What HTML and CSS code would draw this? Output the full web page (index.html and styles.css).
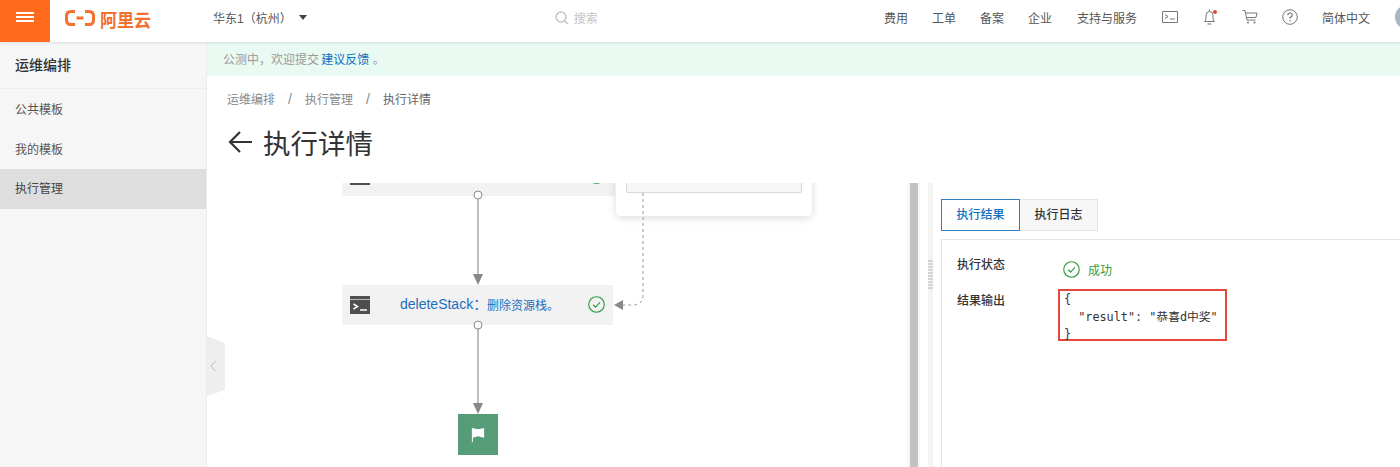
FILE: index.html
```html
<!DOCTYPE html>
<html lang="zh-CN">
<head>
    <meta charset="UTF-8">
    <title>执行详情</title>
    <link rel="stylesheet" href="styles.css">
</head>
<body>
    <header class="topbar">
        <div class="menu-btn"><span></span><span></span><span></span></div>
        <div class="logo">
            <svg class="logo-mark" width="30" height="16" viewBox="0 0 30 16">
                <path d="M10 1.500H6Q1.500 1.500 1.500 6V10Q1.500 14.500 6 14.500H10M20 1.500H24Q28.500 1.500 28.500 6V10Q28.500 14.500 24 14.500H20M11.500 8H18.500" fill="none" stroke="#f4702c" stroke-width="3"/>
            </svg>
            <span class="logo-text">阿里云</span>
        </div>
        <div class="region">华东1（杭州）<i class="caret"></i></div>
        <div class="search">
            <svg width="14" height="14" viewBox="0 0 14 14"><circle cx="6" cy="6" r="5" fill="none" stroke="#c4c4c4" stroke-width="1.500"/><path d="M9.500 9.500L13 13" stroke="#c4c4c4" stroke-width="1.500"/></svg>
            <span>搜索</span>
        </div>
        <nav class="top-nav">
            <a>费用</a>
            <a>工单</a>
            <a>备案</a>
            <a class="nudge">企业</a>
            <a class="nudge">支持与服务</a>
            <svg width="16" height="16" viewBox="0 0 16 16"><path d="M.5 2.500H15.500V13.500H.5Z" fill="none" stroke="#777"/><path d="M3 5.500L6 7.500L3 9.500M8 10H13" fill="none" stroke="#777"/></svg>
            <svg width="16" height="16" viewBox="0 0 16 16"><path d="M2.500 12.500Q4 11.500 4 9V6.500Q4 2.500 7.500 2.500Q11 2.500 11 6.500V9Q11 11.500 12.500 12.500ZM7.500 .5V2.500M5.500 15H9.500" fill="none" stroke="#777"/><circle cx="13" cy="3" r="2" fill="#e5483b"/></svg>
            <svg width="16" height="16" viewBox="0 0 16 16"><path d="M.5 1.500H3L5 11H13.500M3.500 4H15L14 8.500H4.500" fill="none" stroke="#777"/><circle cx="6" cy="13.500" r="1" fill="#777"/><circle cx="12.500" cy="13.500" r="1" fill="#777"/></svg>
            <svg width="16" height="16" viewBox="0 0 16 16"><circle cx="8" cy="8" r="7.300" fill="none" stroke="#777"/><path d="M5.800 6.200Q5.800 4 8 4Q10.200 4 10.200 6Q10.200 7.200 8.900 7.900Q8 8.400 8 9.800" fill="none" stroke="#777" stroke-width="1.200"/><circle cx="8" cy="11.700" r=".8" fill="#777"/></svg>
            <a class="nudge">简体中文</a>
            <div class="avatar"></div>
        </nav>
    </header>

    <div class="layout">
        <aside class="sidebar">
            <div class="sidebar-title">运维编排</div>
            <a class="side-item">公共模板</a>
            <a class="side-item">我的模板</a>
            <a class="side-item active">执行管理</a>
        </aside>

        <main class="main">
            <div class="banner">公测中，欢迎提交 <a>建议反馈</a> 。</div>
            <div class="breadcrumb">
                <span>运维编排</span><i>/</i><span>执行管理</span><i>/</i><span class="current">执行详情</span>
            </div>
            <h1 class="page-title">
                <svg width="24" height="24" viewBox="0 0 24 24"><path d="M12 2L2 12L12 22M2 12H24" fill="none" stroke="#333" stroke-width="2.200"/></svg>
                执行详情
            </h1>

            <div class="workspace">
                <!-- flow diagram, nodes are placed on a free canvas -->
                <div class="flow-canvas">
                    <svg class="links" width="700" height="284" viewBox="0 0 700 284">
                        <path d="M271 16V92M271 146V221" stroke="#aaa" stroke-width="1.500"/>
                        <path d="M266 91H276L271 102ZM266 220H276L271 231Z" fill="#888"/>
                        <circle cx="271" cy="12" r="4" fill="#fff" stroke="#888"/>
                        <circle cx="271" cy="142" r="4" fill="#fff" stroke="#888"/>
                        <path d="M436 10V112Q436 122 426 122H414" fill="none" stroke="#999" stroke-dasharray="3 3"/>
                        <path d="M416 117V127L407 122Z" fill="#888"/>
                    </svg>

                    <div class="node node-top">
                        <svg class="node-icon" width="20" height="18" viewBox="0 0 20 18"><use href="#term"/></svg>
                        <svg class="node-check" width="17" height="17" viewBox="0 0 16 16"><use href="#check"/></svg>
                    </div>
                    <div class="node node-delete">
                        <svg class="node-icon" width="20" height="18" viewBox="0 0 20 18">
                            <g id="term">
                                <rect width="20" height="18" fill="#4f4f4f"/>
                                <path d="M0 3.500H20" stroke="#fff" stroke-width=".6"/>
                                <path d="M3.500 8L7.500 10.500L3.500 13" fill="none" stroke="#fff" stroke-width="1.500"/>
                                <path d="M10 14H17" stroke="#fff" stroke-width="1.500"/>
                            </g>
                        </svg>
                        <span class="node-name">deleteStack：</span>
                        <span class="node-desc">删除资源栈。</span>
                        <svg class="node-check" width="17" height="17" viewBox="0 0 16 16">
                            <g id="check">
                                <circle cx="8" cy="8" r="7.300" fill="none" stroke="#2f9e44" stroke-width="1.100"/>
                                <path d="M4.800 8.200L7.200 10.400L11.200 6" fill="none" stroke="#2f9e44" stroke-width="1.100"/>
                            </g>
                        </svg>
                    </div>

                    <div class="popover"><div class="popover-box"></div></div>

                    <div class="end-node">
                        <svg width="14" height="16" viewBox="0 0 16 18"><path d="M1 1L8 2.500L15 1V12L8 10.500L2.200 12V17H1Z" fill="#fff"/></svg>
                    </div>

                    <div class="collapse-handle">
                        <svg width="6" height="12" viewBox="0 0 6 12"><path d="M5.500 1L1 6L5.500 11" fill="none" stroke="#bbb"/></svg>
                    </div>
                </div>

                <div class="scroll-track"><div class="scroll-thumb"></div></div>
                <div class="drag-bar"><div class="drag-dots"></div></div>

                <section class="result">
                    <div class="tabs">
                        <div class="tab selected">执行结果</div>
                        <div class="tab">执行日志</div>
                    </div>
                    <div class="result-panel">
                        <div class="row">
                            <div class="row-label">执行状态</div>
                            <div class="status">
                                <svg width="17" height="17" viewBox="0 0 16 16"><use href="#check"/></svg>
                                <span>成功</span>
                            </div>
                        </div>
                        <div class="row row-output">
                            <div class="row-label">结果输出</div>
                            <pre class="output">{
  "result": "恭喜d中奖"
}</pre>
                        </div>
                    </div>
                </section>
            </div>
        </main>
    </div>
</body>
</html>
```

FILE: styles.css
```css
* {
    box-sizing: border-box;
    margin: 0;
    padding: 0;
}

html, body {
    height: 100%;
    overflow: hidden;
}

body {
    display: flex;
    flex-direction: column;
    font-family: "Liberation Sans", "Noto Sans CJK SC", sans-serif;
    font-size: 12px;
    color: #333;
    background-color: white;
}

/* top bar */
.topbar {
    display: flex;
    align-items: flex-start;
    flex: none;
    height: 42px;
    background-color: white;
    box-shadow: 0 1px 3px rgba(0, 0, 0, 0.1);
    position: relative;
    z-index: 2;
}

.menu-btn {
    display: flex;
    flex-direction: column;
    justify-content: center;
    gap: 2px;
    flex: none;
    width: 50px;
    height: 42px;
    padding: 0 16px 8px;
    background-color: #ff6a1f;
}

.menu-btn span {
    display: block;
    height: 2px;
    background-color: white;
}

.logo {
    display: flex;
    align-items: center;
    gap: 5px;
    height: 36px;
    margin-left: 15px;
}

.logo-text {
    font-size: 17px;
    font-weight: 700;
    color: #f4702c;
    transform: scaleY(1.1);
}

.region {
    display: flex;
    align-items: center;
    height: 35px;
    margin-left: 62px;
    color: #555;
}

.caret {
    margin-left: 7px;
    border: 4px solid transparent;
    border-top: 5px solid #444;
    border-bottom: 0;
}

.search {
    display: flex;
    align-items: center;
    gap: 5px;
    height: 35px;
    margin-left: 248px;
    color: #c4c4c4;
}

.top-nav {
    display: flex;
    align-items: center;
    gap: 24px;
    height: 34px;
    margin-left: auto;
    margin-right: -19px;
    color: #555;
}

.top-nav .nudge {
    margin-right: 1px;
}

.avatar {
    width: 24px;
    height: 24px;
    border-radius: 50%;
    background-color: #a9b8c0;
}

/* page body */
.layout {
    display: flex;
    flex: 1;
    min-height: 0;
}

.sidebar {
    flex: none;
    width: 207px;
    background-color: #f6f6f6;
    border-right: 1px solid #ececec;
}

.sidebar-title {
    height: 47px;
    line-height: 46px;
    padding-left: 15px;
    font-size: 14px;
    font-weight: 500;
    border-bottom: 1px solid #ececec;
}

.side-item {
    display: block;
    height: 40px;
    line-height: 42px;
    padding-left: 15px;
    color: #555;
}

.side-item.active {
    line-height: 40px;
    background-color: #dedede;
    color: #444;
}

.main {
    display: flex;
    flex-direction: column;
    flex: 1;
    min-width: 0;
}

.banner {
    flex: none;
    height: 34px;
    line-height: 36px;
    padding-left: 16px;
    background-color: #e9faf3;
    color: #999;
}

.banner a {
    color: #0f6fbf;
    margin-left: -1px;
}

.breadcrumb {
    display: flex;
    align-items: center;
    flex: none;
    height: 44px;
    padding-left: 20px;
    color: #888;
}

.breadcrumb i {
    font-style: normal;
    font-size: 14px;
    width: 30px;
    padding-top: 2px;
    text-align: center;
}

.breadcrumb .current {
    color: #666;
}

.page-title {
    display: flex;
    align-items: center;
    gap: 11px;
    flex: none;
    height: 63px;
    padding: 0 0 20px 21px;
    font-size: 27.500px;
    font-weight: 400;
}

.workspace {
    display: flex;
    flex: 1;
    min-height: 0;
}

/* flow canvas */
.flow-canvas {
    flex: none;
    width: 700px;
    position: relative;
    overflow: hidden;
}

.links {
    position: absolute;
    top: 0;
    left: 0;
    z-index: 1;
}

.node {
    position: absolute;
    left: 135px;
    width: 271px;
    height: 40px;
    background-color: #f2f2f2;
}

.node-top {
    top: -27px;
    width: 273px;
}

.node-delete {
    top: 102px;
}

.node-icon {
    position: absolute;
    left: 8px;
    top: 11px;
}

.node-check {
    position: absolute;
    left: 246px;
    top: 11px;
}

.node-name {
    position: absolute;
    left: 58px;
    top: 8px;
    font-size: 14px;
    color: #1b6fbd;
}

.node-desc {
    position: absolute;
    left: 145px;
    top: 11px;
    color: #1b6fbd;
}

.popover {
    position: absolute;
    left: 409px;
    top: -60px;
    width: 196px;
    height: 93px;
    padding: 0 10px;
    background-color: white;
    border-radius: 4px;
    box-shadow: 0 2px 8px rgba(0, 0, 0, 0.14);
}

.popover-box {
    height: 70px;
    background-color: #f7f7f7;
    border: 1px solid #d8d8d8;
    border-radius: 2px;
}

.end-node {
    display: flex;
    align-items: center;
    justify-content: center;
    position: absolute;
    left: 251px;
    top: 231px;
    width: 40px;
    height: 41px;
    background-color: #569d77;
}

.collapse-handle {
    display: flex;
    align-items: center;
    position: absolute;
    left: 0;
    top: 153px;
    width: 18px;
    height: 60px;
    padding-left: 3px;
    background-color: #eeeeee;
    clip-path: polygon(0 0, 100% 12%, 100% 90%, 0 100%);
}

/* splitter between canvas and result */
.scroll-track {
    flex: none;
    width: 13px;
    padding: 0 2px 0 3px;
    background-color: #f7f7f7;
}

.scroll-thumb {
    height: 100%;
    background-color: #c2c2c2;
}

.drag-bar {
    flex: none;
    width: 5px;
    margin-left: 8px;
    background-color: #f4f4f4;
    position: relative;
}

.drag-dots {
    position: absolute;
    top: 77px;
    left: 0;
    width: 5px;
    height: 30px;
    background-image: repeating-linear-gradient(#d4d4d4 0 2px, #f4f4f4 2px 3px);
}

/* result panel */
.result {
    display: flex;
    flex-direction: column;
    flex: 1;
    min-width: 0;
    padding: 16px 0 0 8px;
}

.tabs {
    display: flex;
    flex: none;
    height: 32px;
}

.tab {
    width: 78px;
    line-height: 30px;
    text-align: center;
    font-weight: 500;
    background-color: #f7f7f7;
    border: 1px solid #e5e5e5;
    border-left: 0;
}

.tab.selected {
    width: 79px;
    color: #0f6fbf;
    background-color: white;
    border: 1px solid #2f7fc1;
}

.result-panel {
    flex: 1;
    min-height: 0;
    margin-top: 8px;
    padding: 17px 15px 0;
    border: 1px solid #e5e5e5;
    border-width: 1px 0 0 1px;
}

.row {
    display: flex;
}

.row-label {
    flex: none;
    width: 101px;
    line-height: 16px;
    font-weight: 500;
}

.row-output {
    margin-top: 12px;
}

.row-output .row-label {
    margin-top: 4px;
}

.status {
    display: flex;
    align-items: center;
    gap: 8px;
    height: 16px;
    margin: 4px 0 0 5px;
    color: #2f9e44;
}

.output {
    width: 169px;
    height: 52px;
    padding: 0 4px;
    border: 2px solid #e5483b;
    font-family: "DejaVu Sans Mono", "Noto Sans CJK SC", monospace;
    font-size: 11.800px;
    line-height: 17.500px;
    color: #333;
}
```
